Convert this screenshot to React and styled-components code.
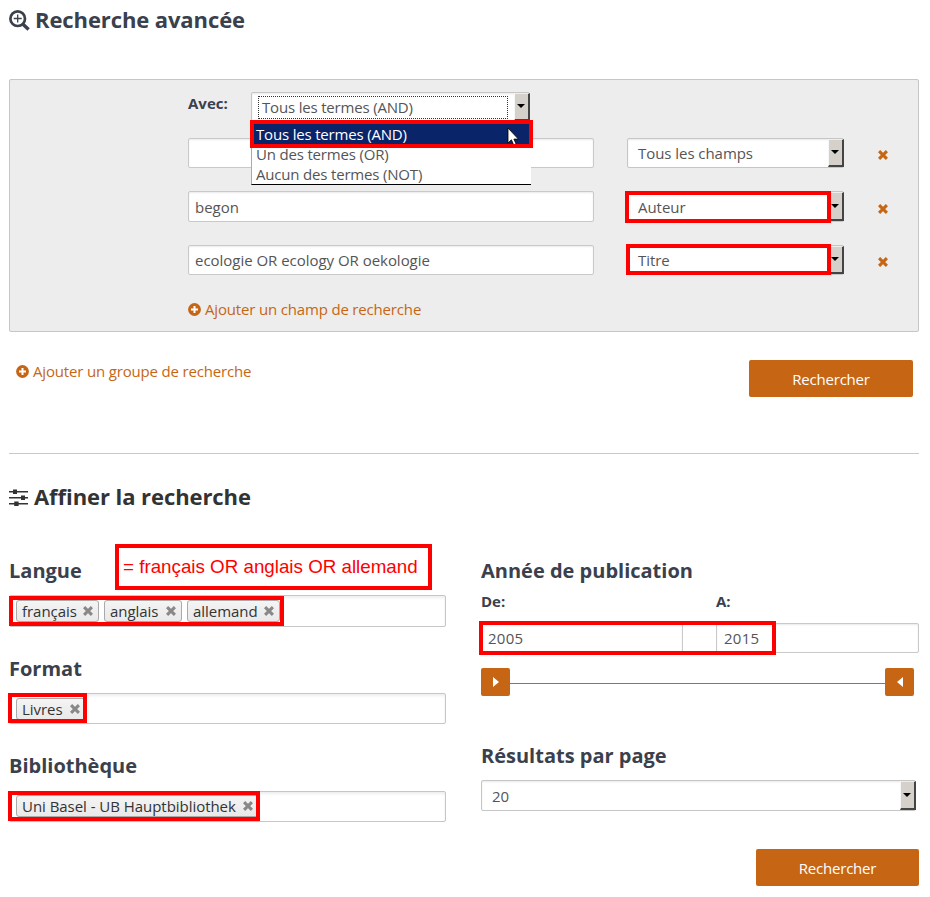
import React from "react";
import styled, { createGlobalStyle } from "styled-components";

const orange = "#c66614";
const ink = "#3a404c";

const GlobalStyle = createGlobalStyle`
  * { box-sizing: border-box; }
  body { margin: 0; background: #fff; color: #555; font: 15px/20px "Open Sans", sans-serif; }
  h1, h2, h3 { margin: 0; color: ${ink}; font-weight: 700; white-space: nowrap; }
`;

const Page = styled.main`
  width: 930px;
  height: 897px;
  padding: 0 11px 0 9px;
  overflow: hidden;
`;

const Title = styled.h1`
  display: flex;
  align-items: center;
  gap: ${(p) => p.$gap}px;
  height: ${(p) => p.$height}px;
  padding-bottom: 2px;
  font-size: 22px;
  line-height: 30px;
  letter-spacing: ${(p) => p.$spacing || 0}px;
  color: ${(p) => p.$color || ink};
  svg { flex: none; margin-top: 2px; }
`;

const SearchPanel = styled.section`
  display: flex;
  flex-direction: column;
  height: 253px;
  margin-top: 39px;
  padding: 12px 0 0 178px;
  background: #ededed;
  border: 1px solid #c6c6c6;
  border-radius: 2px;
`;

const OperatorRow = styled.div`
  display: flex;
  height: 30px;
  margin-bottom: 16px;
`;

const Label = styled.label`
  width: ${(p) => p.$width}px;
  font-size: 15px;
  font-weight: 700;
  color: ${ink};
  line-height: ${(p) => p.$line || 20}px;
`;

const OperatorSelect = styled.div`
  position: relative;
  z-index: 2;
  width: 279px;
  height: 30px;
`;

const SelectBox = styled.div`
  position: relative;
  display: flex;
  width: ${(p) => p.$width}px;
  height: ${(p) => p.$height || 30}px;
  background: #fff;
  border: 1px solid #c6c6c6;
  border-radius: 2px;
  box-shadow: inset 0 1px 2px #e8e8e8;
`;

const SelectValue = styled.span`
  flex: 1;
  display: flex;
  align-items: center;
  padding-left: 10px;
  letter-spacing: -0.05px;
`;

const FocusValue = styled.span`
  flex: 1;
  height: 23px;
  margin: 3px 6px 0 6px;
  padding-left: 3px;
  border: 1px dotted #333;
  letter-spacing: -0.18px;
`;

const ArrowButton = styled.span`
  flex: none;
  display: flex;
  align-items: center;
  justify-content: center;
  width: 16px;
  margin-right: -1px;
  padding-right: 1px;
  background: #d5d1ca;
  border: solid;
  border-width: 1px 2px 2px 1px;
  border-color: #eee #444 #444 #f7f7f7;
  svg { flex: none; margin-top: -1px; }
`;

const Dropdown = styled.ul`
  position: absolute;
  top: 29px;
  left: 0;
  width: 280px;
  height: 64px;
  margin: 0;
  padding: 3px 0 0;
  list-style: none;
  background: #fff;
  border-left: 1px solid #aaa;
  border-bottom: 1px solid #000;
`;

const Option = styled.li`
  height: 20px;
  padding-left: 4px;
  line-height: 20px;
  letter-spacing: -0.18px;
  white-space: nowrap;
  color: ${(p) => (p.$active ? "#fff" : "#555")};
  background: ${(p) => (p.$active ? "#0a246a" : "transparent")};
`;

const Highlight = styled.span`
  position: absolute;
  z-index: 3;
  top: ${(p) => p.$top}px;
  left: ${(p) => p.$left}px;
  width: ${(p) => p.$width}px;
  height: ${(p) => p.$height}px;
  border: 4px solid #f00;
  pointer-events: none;
`;

const Pointer = styled.svg`
  position: absolute;
  z-index: 2;
  top: 35px;
  left: 256px;
`;

const FieldRow = styled.div`
  display: flex;
  align-items: flex-start;
  height: ${(p) => p.$height}px;
`;

const TextField = styled.div`
  display: flex;
  align-items: center;
  width: ${(p) => p.$width}px;
  height: ${(p) => p.$height || 30}px;
  padding-left: ${(p) => p.$pad || 6}px;
  background: #fff;
  border: 1px solid #c9c9c9;
  border-radius: 2px;
  box-shadow: inset 0 1px 2px #eaeaea;
  letter-spacing: ${(p) => p.$spacing || -0.03}px;
`;

const FieldSelect = styled.div`
  margin: 0 33px;
`;

const RemoveButton = styled.span`
  display: flex;
  height: ${(p) => p.$height || 33}px;
  align-items: center;
`;

const AddLink = styled.a`
  display: flex;
  align-items: center;
  gap: 4px;
  height: 20px;
  color: ${orange};
  letter-spacing: -0.17px;
  white-space: nowrap;
`;

const PanelFooter = styled.div`
  display: flex;
  justify-content: space-between;
  align-items: flex-start;
  height: 122px;
  padding: 28px 6px 0 7px;
  border-bottom: 1px solid #c9c9c9;
  ${AddLink} { margin-top: 1px; }
`;

const SearchButton = styled.button`
  width: ${(p) => p.$width}px;
  height: 37px;
  padding: 0;
  border: 0;
  border-radius: 2px;
  background: ${orange};
  color: #fff;
  font: 15px/20px "Open Sans", sans-serif;
  letter-spacing: -0.2px;
`;

const Columns = styled.div`
  display: grid;
  grid-template-columns: 437px 438px;
  column-gap: 35px;
`;

const Column = styled.div`
  display: flex;
  flex-direction: column;
`;

const Group = styled.section`
  position: relative;
  height: ${(p) => p.$height}px;
`;

const GroupTitle = styled.h3`
  height: ${(p) => p.$height}px;
  padding-top: ${(p) => p.$top || 0}px;
  font-size: 20px;
  line-height: 30px;
`;

const TagField = styled.div`
  position: relative;
  display: flex;
  gap: 5px;
  height: ${(p) => p.$height}px;
  padding: ${(p) => p.$pad}px 0 0 6px;
  border: 1px solid #c6c6c6;
  border-radius: 2px;
  box-shadow: inset 0 2px 3px #eee;
`;

const Tag = styled.span`
  display: flex;
  align-items: center;
  justify-content: space-between;
  width: ${(p) => p.$width}px;
  height: 22px;
  padding: 0 4px 0 5px;
  border: 1px solid #aaa;
  border-radius: 3px;
  background: linear-gradient(#f4f4f4, #e9e9e9);
  color: #333;
  letter-spacing: -0.04px;
  white-space: nowrap;
`;

const Note = styled.p`
  position: absolute;
  top: 4px;
  left: 106px;
  width: 317px;
  height: 46px;
  margin: 0;
  padding-left: 4px;
  border: 4px solid #f00;
  background: #fff;
  color: #f00;
  font: 18.78px/38px "Liberation Sans", sans-serif;
  white-space: nowrap;
`;

const YearLabels = styled.div`
  display: flex;
  height: 31px;
`;

const YearFields = styled.div`
  position: relative;
  display: flex;
  justify-content: space-between;
`;

const Slider = styled.div`
  display: flex;
  align-items: center;
  width: 433px;
  margin-top: 15px;
`;

const SliderTrack = styled.span`
  flex: 1;
  height: 1px;
  margin-top: 2px;
  background: ${orange};
`;

const SliderHandle = styled.span`
  display: flex;
  align-items: center;
  justify-content: center;
  width: 29px;
  height: 28px;
  border-radius: 2px;
  background: ${orange};
`;

const Submit = styled.div`
  display: flex;
  justify-content: flex-end;
`;

const Cross = ({ size = 12, color = orange }) => (
  <svg width={size} height={size} viewBox="0 0 12 12">
    <path d="M2.1 2.1 9.9 9.9M9.9 2.1 2.1 9.9" stroke={color} strokeWidth="3" fill="none" />
  </svg>
);

const PlusCircle = () => (
  <svg width="13" height="13" viewBox="0 0 13 13">
    <circle cx="6.5" cy="6.5" r="6.4" fill={orange} />
    <path d="M6.5 3v7M3 6.5h7" stroke="#fff" strokeWidth="2" />
  </svg>
);

const SearchPlus = () => (
  <svg width="21" height="21" viewBox="0 0 21 21" fill="none" stroke={ink}>
    <circle cx="8.7" cy="8.7" r="7.3" strokeWidth="2.7" />
    <path d="M14 14.2l5.6 5.3" strokeWidth="3.4" />
    <path d="M8.7 4.5v8M4.7 8.5h8" strokeWidth="1.3" />
  </svg>
);

const Sliders = () => (
  <svg width="19" height="19" viewBox="0 0 19 19" fill="#333">
    <path d="M0 3h19v1.4H0zM0 9h19v1.4H0zM0 15h19v1.4H0z" />
    <path d="M4 1.5h4v4.4H4zM12 7.5h4v4.4h-4zM5.2 13.5h4.4v4.4H5.2z" />
  </svg>
);

const Arrow = () => (
  <ArrowButton>
    <svg width="8" height="4" viewBox="0 0 8 4"><path d="M0 0h8L4 4z" fill="#000" /></svg>
  </ArrowButton>
);

const Handle = ({ path }) => (
  <SliderHandle>
    <svg width="6" height="10" viewBox="0 0 6 10"><path d={path} fill="#fff" /></svg>
  </SliderHandle>
);

const rows = [
  { text: "", field: "Tous les champs", height: 53 },
  { text: "begon", field: "Auteur", height: 54, box: 31, remove: 35, mark: [-3, -1, 206, 32] },
  { text: "ecologie OR ecology OR oekologie", field: "Titre", height: 54, mark: [-2, -2, 205, 31] },
];

const filters = [
  { title: "Langue", height: 98, head: 55, box: 32, pad: 4, tags: [["français", 83], ["anglais", 78], ["allemand", 93]], mark: [-1, 0, 275, 30], note: "= français OR anglais OR allemand" },
  { title: "Format", height: 97, head: 55, box: 31, pad: 4, tags: [["Livres", 70]], mark: [-2, -1, 79, 30] },
  { title: "Bibliothèque", height: 90, head: 56, box: 31, pad: 3, tags: [["Uni Basel - UB Hauptbibliothek", 243]], mark: [-2, -1, 252, 30] },
];

export default function App() {
  return (
    <Page>
      <GlobalStyle />
      <Title $height={40} $gap={5} $spacing={-0.1}><SearchPlus />Recherche avancée</Title>
      <SearchPanel>
        <OperatorRow>
          <Label $width={63} $line={23}>Avec:</Label>
          <OperatorSelect>
            <SelectBox $width={279}><FocusValue>Tous les termes (AND)</FocusValue><Arrow /></SelectBox>
            <Dropdown>
              <Option $active>Tous les termes (AND)</Option>
              <Option>Un des termes (OR)</Option>
              <Option>Aucun des termes (NOT)</Option>
            </Dropdown>
            <Highlight $top={28} $left={-1} $width={283} $height={28} />
            <Pointer width="12" height="19" viewBox="0 0 12 19">
              <path d="M1 1v15l3.4-3.2 2.3 5.2 2.4-1-2.2-4.9H11.4z" fill="#fff" stroke="#000" strokeWidth=".8" />
            </Pointer>
          </OperatorSelect>
        </OperatorRow>
        {rows.map((r) => (
          <FieldRow key={r.field} $height={r.height}>
            <TextField $width={406} $height={r.box}>{r.text}</TextField>
            <FieldSelect>
              <SelectBox $width={217} $height={r.box}>
                <SelectValue>{r.field}</SelectValue><Arrow />
                {r.mark && <Highlight $left={r.mark[0]} $top={r.mark[1]} $width={r.mark[2]} $height={r.mark[3]} />}
              </SelectBox>
            </FieldSelect>
            <RemoveButton $height={r.remove}><Cross /></RemoveButton>
          </FieldRow>
        ))}
        <AddLink><PlusCircle />Ajouter un champ de recherche</AddLink>
      </SearchPanel>
      <PanelFooter>
        <AddLink><PlusCircle />Ajouter un groupe de recherche</AddLink>
        <SearchButton $width={164}>Rechercher</SearchButton>
      </PanelFooter>
      <Title as="h2" $height={86} $gap={6} $color="#333" $spacing={-0.07}>
        <Sliders />Affiner la recherche
      </Title>
      <Columns>
        <Column>
          {filters.map((f) => (
            <Group key={f.title} $height={f.height}>
              <GroupTitle $height={f.head} $top={16}>{f.title}</GroupTitle>
              {f.note && <Note>{f.note}</Note>}
              <TagField $height={f.box} $pad={f.pad}>
                {f.tags.map(([name, width]) => (
                  <Tag key={name} $width={width}>{name}<Cross color="#888" /></Tag>
                ))}
                <Highlight $left={f.mark[0]} $top={f.mark[1]} $width={f.mark[2]} $height={f.mark[3]} />
              </TagField>
            </Group>
          ))}
        </Column>
        <Column>
          <Group $height={201}>
            <GroupTitle $height={52} $top={16}>Année de publication</GroupTitle>
            <YearLabels><Label $width={235} $line={18}>De:</Label><Label $line={18}>A:</Label></YearLabels>
            <YearFields>
              <TextField $width={202} $spacing={0.25}>2005</TextField>
              <TextField $width={203} $pad={7} $spacing={0.25}>2015</TextField>
              <Highlight $left={-2} $top={-2} $width={297} $height={34} />
            </YearFields>
            <Slider><Handle path="M0 0v10l6-5z" /><SliderTrack /><Handle path="M6 0v10L0 5z" /></Slider>
          </Group>
          <Group $height={108}>
            <GroupTitle $height={39}>Résultats par page</GroupTitle>
            <SelectBox $width={435} $height={31}><SelectValue>20</SelectValue><Arrow /></SelectBox>
          </Group>
          <Submit><SearchButton $width={163}>Rechercher</SearchButton></Submit>
        </Column>
      </Columns>
    </Page>
  );
}
